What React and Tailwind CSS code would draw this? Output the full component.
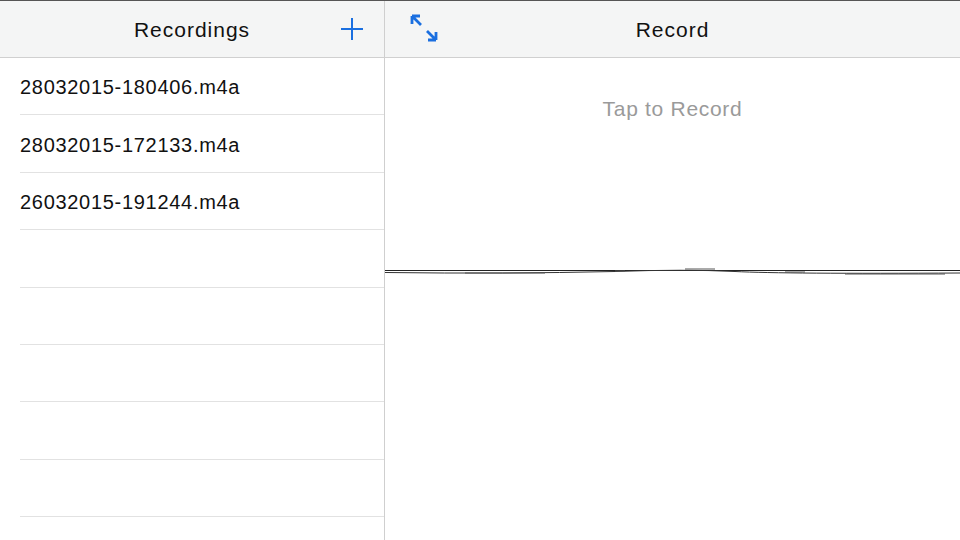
export default function App() {
  const files = ["28032015-180406.m4a", "28032015-172133.m4a", "26032015-191244.m4a", "", "", "", "", ""];
  return (
    <div className="w-[960px] h-[540px] flex flex-col bg-white border-t border-[#555] overflow-hidden" style={{ fontFamily: '"Liberation Sans", Arial, sans-serif' }}>
      <div className="flex h-[57px] bg-[#f4f5f5] border-b border-[#d0d0d0]">
        <div className="w-[385px] relative flex items-center justify-center border-r border-[#cfcfcf] pt-[2px]">
          <span className="text-[21px] text-[#111] tracking-[1px]">Recordings</span>
          <svg className="absolute left-[340px] top-[16px]" width="24" height="24" viewBox="0 0 24 24" fill="none" stroke="#1a6fe0" strokeWidth="2">
            <path d="M12 1v22M1 12h22" />
          </svg>
        </div>
        <div className="flex-1 relative flex items-center justify-center pt-[2px]">
          <svg className="absolute left-[25px] top-[13px]" width="28" height="28" viewBox="0 0 28 28" fill="none" stroke="#1a6fe0" strokeWidth="2.8">
            <path d="M2 2l9 9M2 2v8M2 2h8" />
            <path d="M26 26l-9-9M26 26v-8M26 26h-8" />
          </svg>
          <span className="text-[21px] text-[#111] tracking-[1px]">Record</span>
        </div>
      </div>
      <div className="flex flex-1">
        <div className="w-[385px] border-r border-[#cfcfcf] flex flex-col">
          {files.map((f, i) => (
            <div key={i} className="h-[57.4px] ml-[20px] border-b border-[#e2e2e2] flex items-center pt-[2px]">
              <span className="text-[20px] text-[#111] tracking-[0.7px]">{f}</span>
            </div>
          ))}
        </div>
        <div className="flex-1 flex flex-col items-center">
          <div className="mt-[35px] text-[21px] text-[#9a9a9a] tracking-[0.7px]">Tap to Record</div>
          <svg className="mt-[140px]" width="575" height="12" viewBox="0 0 575 12" fill="none">
            <path d="M0 5.5H575" stroke="#222" strokeWidth="1" />
            <path d="M0 7.5 Q120 9 230 6.5 Q300 4 350 6.5 T575 8" stroke="#333" strokeWidth="1" />
            <path d="M80 8H160M230 6H240M300 4H330M400 7H420M460 9H560" stroke="#555" strokeWidth="1" />
          </svg>
        </div>
      </div>
    </div>
  );
}
